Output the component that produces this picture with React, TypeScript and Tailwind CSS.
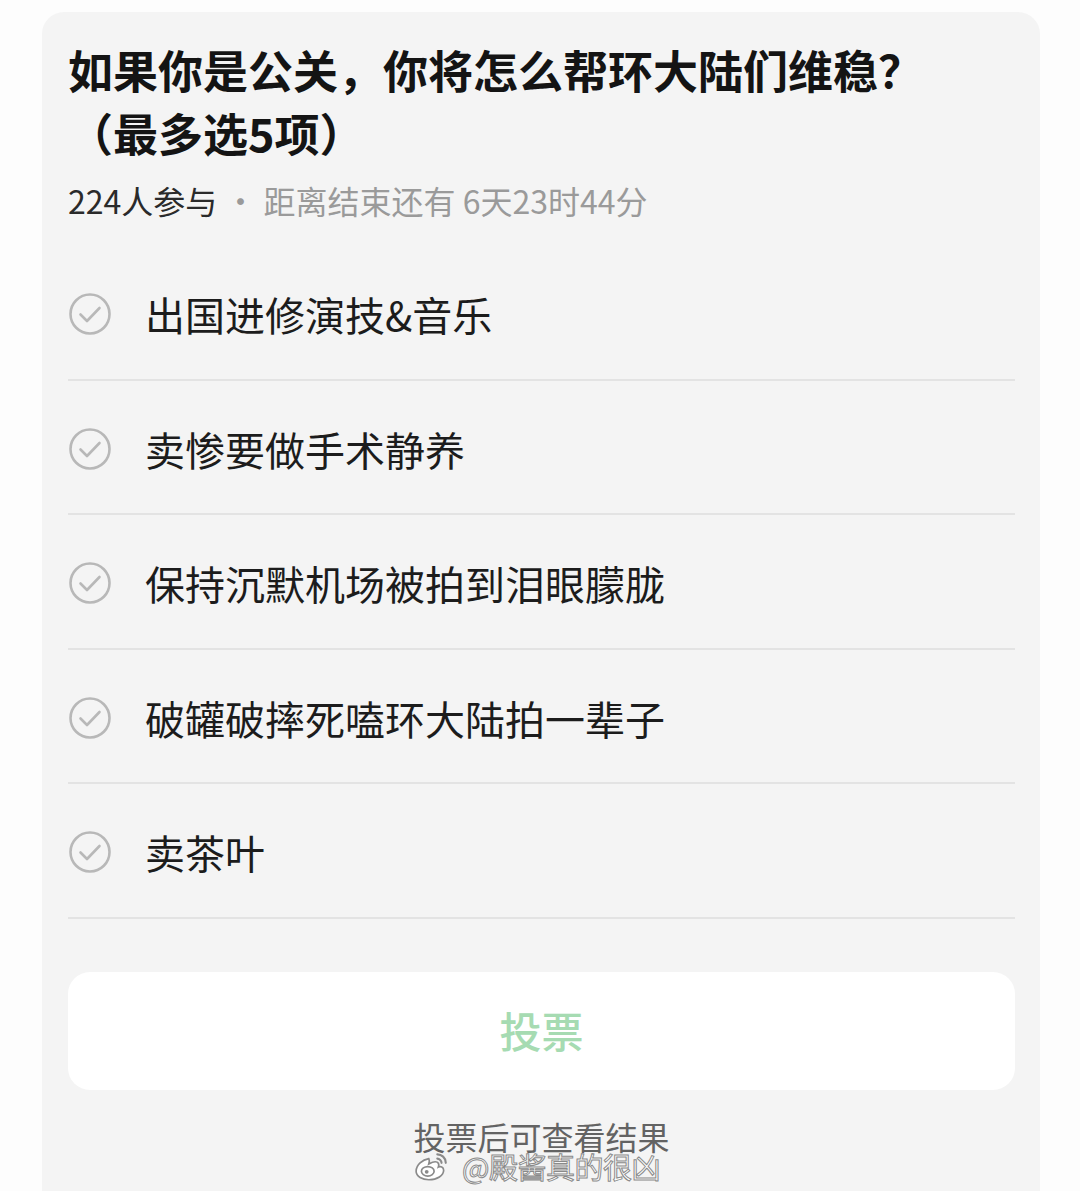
import React from "react";

const options = [
  "出国进修演技&音乐",
  "卖惨要做手术静养",
  "保持沉默机场被拍到泪眼朦胧",
  "破罐破摔死嗑环大陆拍一辈子",
  "卖茶叶",
];

function CheckCircle() {
  return (
    <svg width="44" height="44" viewBox="0 0 44 44" fill="none">
      <circle cx="22" cy="22" r="19.5" stroke="#b8b8b8" strokeWidth="2.6" />
      <path d="M12.5 22.5 L19 29 L31.5 16" stroke="#b8b8b8" strokeWidth="2.6" strokeLinecap="round" strokeLinejoin="round" />
    </svg>
  );
}

function WeiboLogo() {
  return (
    <svg width="36" height="32" viewBox="0 0 34 30" fill="none">
      <path d="M14 8c-6 1-12 6-12 12 0 5 6 8 12 8 8 0 14-4 14-9 0-3-3-4-5-3 1-3 0-5-3-5-2 0-4 1-6 2 1-3 0-5 0-5z" fill="#fff" stroke="#8a8a8a" strokeWidth="1.6" />
      <ellipse cx="13" cy="20" rx="6" ry="4.5" fill="#fff" stroke="#8a8a8a" strokeWidth="1.6" />
      <circle cx="12" cy="20.5" r="1.8" fill="#8a8a8a" />
      <path d="M22 4c4 0 8 3 8 8" stroke="#8a8a8a" strokeWidth="2" strokeLinecap="round" />
      <path d="M22 8c2 0 4 2 4 4" stroke="#8a8a8a" strokeWidth="2" strokeLinecap="round" />
    </svg>
  );
}

export default function App() {
  return (
    <div
      className="w-[1080px] h-[1191px] overflow-hidden bg-[#fdfdfd] relative"
      style={{ fontFamily: '"Noto Sans CJK SC", "Noto Sans", sans-serif' }}
    >
      <div className="ml-[42px] mt-[12px] w-[998px] h-[1200px] bg-[#f4f4f4] rounded-[22px] pl-[26px] pr-[25px] pt-[26px]">
        <h1 className="text-[45px] leading-[63px] font-bold text-[#141414]">
          如果你是公关，你将怎么帮环大陆们维稳？
          <br />
          （最多选5项）
        </h1>
        <div className="mt-[16px] text-[32px] leading-[40px] text-[#9a9a9a]">
          <span className="text-[#2a2a2a]">224人参与</span> · 距离结束还有 6天23时44分
        </div>
        <div className="mt-[26px]">
          {options.map((o) => (
            <div
              key={o}
              className="h-[134.5px] box-border border-b-2 border-[#e3e3e3] flex items-center pt-[4px]"
            >
              <CheckCircle />
              <span className="ml-[33px] text-[40px] leading-[50px] text-[#1c1c1c]">{o}</span>
            </div>
          ))}
        </div>
        <div className="mt-[53px] h-[118px] bg-white rounded-[22px] flex items-center justify-center">
          <span className="text-[42px] font-medium text-[#a6dbb2] -mt-[2px]">投票</span>
        </div>
        <div className="mt-[26px] text-center text-[32px] leading-[40px] text-[#636363]">
          投票后可查看结果
        </div>
      </div>
      <div className="absolute left-[414px] top-[1148px] flex items-center gap-[12px]">
        <WeiboLogo />
        <span
          className="text-[29px] leading-[36px] text-white tracking-[-0.5px]"
          style={{ WebkitTextStroke: "1px #8a8a8a" }}
        >
          @殿酱真的很凶
        </span>
      </div>
    </div>
  );
}
